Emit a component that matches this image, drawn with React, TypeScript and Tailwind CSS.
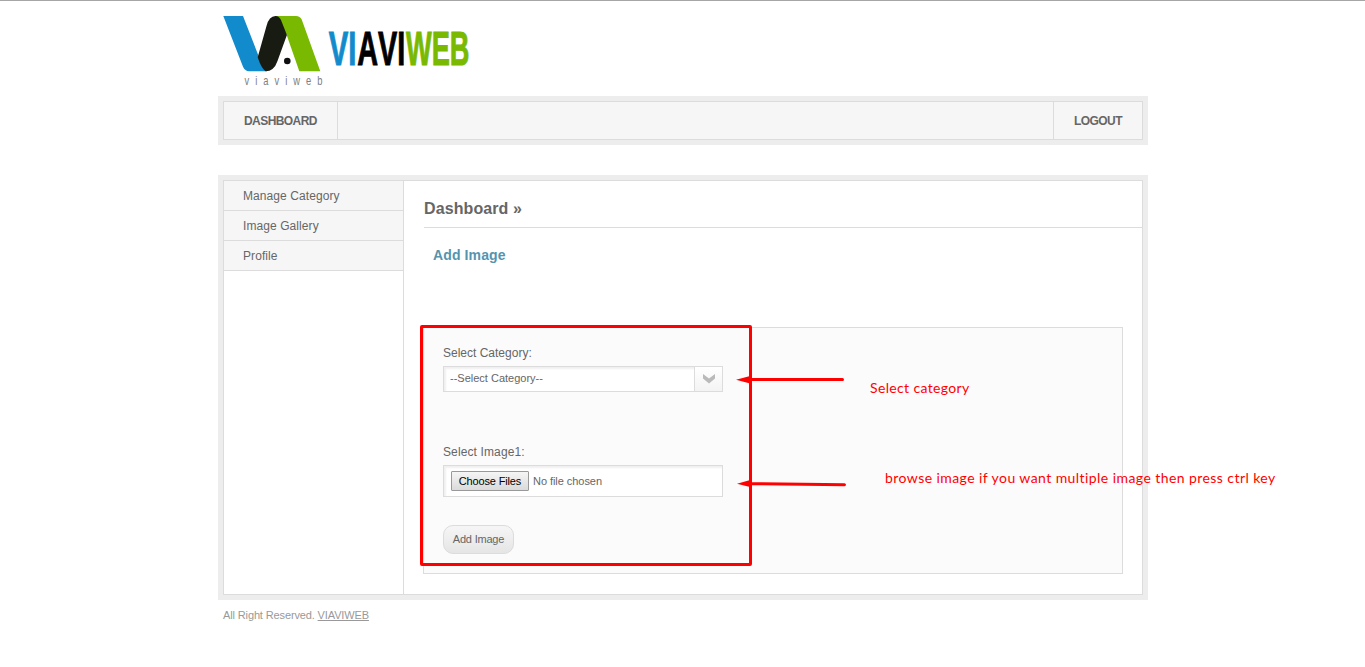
import React from "react";

function Logo() {
  return (
    <svg width="256" height="80" viewBox="0 0 256 80" className="block">
      <path d="M5.300 8H25L41 49L49 63.300H31Q27 63 25 58.700Z" fill="#128bcd" />
      <path d="M57 8H78Q82 8 83.700 11.500L102.300 63.300H81.300L68.500 26.500L60 12Z" fill="#79b901" />
      <path d="M39.700 49.300L48.500 18Q51 8 57.500 8Q61 8 63 12L68.900 27L59.500 53Q56 63.300 47.500 63.300Q43 60 39.700 49.300Z" fill="#181b12" />
      <circle cx="69.300" cy="53" r="3.300" fill="#101010" />
      <text transform="translate(26.500 77) scale(.72 1)" fontSize="13" letterSpacing="8.350" fill="#808080" className="font-['Liberation_Sans',sans-serif]">viaviweb</text>
      <g fontSize="48" strokeWidth="1" className="font-['Liberation_Sans',sans-serif] font-bold [font-kerning:none]">
        <text transform="translate(110.800 57) scale(.61 1)" fill="#128bcd" stroke="#128bcd">VI</text>
        <text transform="translate(139.300 57) scale(.6 1)" fill="#000" stroke="#000">AVI</text>
        <text transform="translate(188 57) scale(.567 1)" fill="#79b901" stroke="#79b901">WEB</text>
      </g>
    </svg>
  );
}

const links = ["Manage Category", "Image Gallery", "Profile"];

export default function App() {
  return (
    <div className="relative h-[667px] w-[1365px] overflow-hidden border-t border-[#a6a6a6] bg-white font-['Liberation_Sans',Arial,sans-serif] text-xs text-[#666]">
      <div className="ml-[218px] w-[930px]">
        <header className="h-[95px] pt-[7px]"><Logo /></header>

        <nav className="h-[49px] bg-[#ededed] p-[5px]">
          <div className="flex h-[39px] justify-between border border-[#dcdcdc] bg-[#f6f6f6] font-bold leading-[39px] tracking-[-0.57px]">
            <a className="h-[37px] w-[114px] border-r border-[#dcdcdc] pl-5">DASHBOARD</a>
            <a className="h-[37px] w-[89px] border-l border-[#dcdcdc] pl-5">LOGOUT</a>
          </div>
        </nav>

        <div className="mt-[30px] h-[425px] bg-[#ededed] p-[5px]">
          <div className="flex h-[415px] border border-[#dcdcdc] bg-white">
            <aside className="w-[180px] shrink-0 border-r border-[#dcdcdc]">
              {links.map((l) => (
                <a key={l} className="block h-[30px] border-b border-[#dcdcdc] bg-[#f6f6f6] pl-[19px] leading-[31px] tracking-[0.08px]">{l}</a>
              ))}
            </aside>
            <main className="flex-1 pl-5">
              <h1 className="h-[47px] border-b border-[#dcdcdc] pt-[18px] text-base font-bold leading-[19px] tracking-[0.1px]">Dashboard »</h1>
              <h2 className="ml-[9px] mt-[18px] h-[81px] text-sm font-bold leading-[18px] tracking-[0.12px] text-[#5494af]">Add Image</h2>
              <form className="-ml-px h-[247px] w-[700px] border border-[#dcdcdc] bg-[#fbfbfb] pl-[19px] pt-[17px]">
                <label className="block h-[21px] leading-[16px]">Select Category:</label>
                <div className="flex h-[26px] w-[280px] border border-[#dcdcdc] bg-white shadow-[inset_2px_2px_2px_#f0f0f0]">
                  <span className="w-[251px] border-r border-[#dcdcdc] pl-1.5 text-[11px] leading-[23px]">--Select Category--</span>
                  <span className="flex flex-1 items-center justify-center bg-linear-to-b from-white to-[#f3f3f3]">
                    <svg width="12" height="10" viewBox="0 0 12 10"><path d="M0 0L6 4.500L12 0V4.500L6 9.500L0 4.500Z" fill="#bababa" /></svg>
                  </span>
                </div>
                <label className="mt-[52px] block h-[21px] leading-[16px] tracking-[0.12px]">Select Image1:</label>
                <div className="flex h-8 w-[280px] items-start border border-[#dcdcdc] bg-white pl-[7px] pt-[5px] text-[11px] shadow-[inset_2px_2px_2px_#f0f0f0]">
                  <button type="button" className="h-5 w-[78px] rounded-[1px] border border-[#999] bg-linear-to-b from-[#f5f5f5] to-[#dadada] leading-[18px] tracking-[-0.15px] text-black">Choose Files</button>
                  <span className="ml-1 leading-5 tracking-[-0.05px]">No file chosen</span>
                </div>
                <button type="button" className="mt-7 block h-[29px] w-[71px] rounded-[10px] border border-[#dcdcdc] bg-linear-to-b from-[#f6f6f6] to-[#e5e5e5] text-[11px] leading-[27px] tracking-[-0.2px]">Add Image</button>
              </form>
            </main>
          </div>
        </div>
        <footer className="pl-[5px] pt-[7px] text-[11px] leading-4 tracking-[-0.13px] text-[#999]">All Right Reserved. <a className="underline">VIAVIWEB</a></footer>
      </div>

      <div className="absolute left-[420px] top-[324px] h-[241px] w-[332px] rounded-[2px] border-[3px] border-[red]" />
      <svg className="absolute left-[736px] top-[372px]" width="112" height="116" viewBox="0 0 112 116">
        <path d="M0 6.700L16 2.500V11Z M1 110.700L16 106.500V114.500Z" fill="red" />
        <path d="M12 6.500H106.500M12 110.700L108.500 111.700" stroke="red" strokeWidth="3" strokeLinecap="round" />
      </svg>
      <span className="absolute left-[870px] top-[377px] whitespace-nowrap font-[Lato,sans-serif] text-sm leading-5 tracking-[0.35px] text-[red]">Select category</span>
      <span className="absolute left-[885px] top-[467px] whitespace-nowrap font-[Lato,sans-serif] text-sm leading-5 tracking-[0.43px] text-[red]">browse image if you want multiple image then press ctrl key</span>
    </div>
  );
}
